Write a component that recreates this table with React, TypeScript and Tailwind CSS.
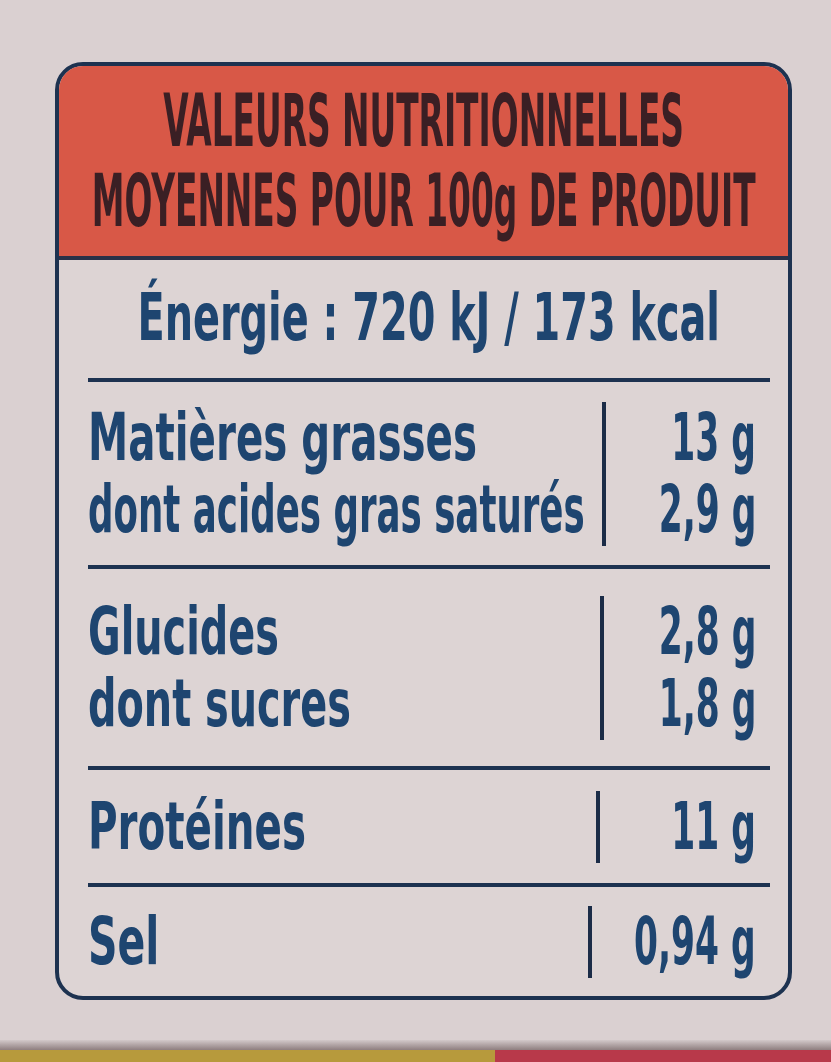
type Row = { label: string; labelScale: string; value: string; valueBox: string };
type Section = { height: string; rows: Row[]; last?: boolean };

const sections: Section[] = [
  {
    height: "h-[187px]",
    rows: [
      { label: "Matières grasses", labelScale: "scale-x-[0.68]", value: "13 g", valueBox: "w-[164px]" },
      { label: "dont acides gras saturés", labelScale: "scale-x-[0.60]", value: "2,9 g", valueBox: "w-[164px]" },
    ],
  },
  {
    height: "h-[201px]",
    rows: [
      { label: "Glucides", labelScale: "scale-x-[0.67]", value: "2,8 g", valueBox: "w-[166px]" },
      { label: "dont sucres", labelScale: "scale-x-[0.67]", value: "1,8 g", valueBox: "w-[166px]" },
    ],
  },
  {
    height: "h-[117px]",
    rows: [{ label: "Protéines", labelScale: "scale-x-[0.68]", value: "11 g", valueBox: "w-[170px]" }],
  },
  {
    height: "h-[109px]",
    last: true,
    rows: [{ label: "Sel", labelScale: "scale-x-[0.69]", value: "0,94 g", valueBox: "w-[178px]" }],
  },
];

export default function App() {
  const font = { fontFamily: '"DejaVu Sans Condensed", "Liberation Sans Narrow", "Liberation Sans", sans-serif' };

  return (
    <div className="w-[831px] h-[1062px] bg-[#dad0d1] flex flex-col overflow-hidden" style={font}>
      <div className="flex-1 pt-[62px] pl-[55px] pr-[39px]">
        <div className="border-4 border-[#1d3250] rounded-[28px] overflow-hidden bg-[#ddd4d4]">
          <div className="h-[194px] bg-[#d85847] border-b-4 border-[#2a3148] flex flex-col items-center justify-center text-[#3a1f24] font-bold text-[73px] leading-[80px] whitespace-nowrap">
            <div className="scale-x-[0.50]">VALEURS NUTRITIONNELLES</div>
            <div className="scale-x-[0.50]">MOYENNES POUR 100g DE PRODUIT</div>
          </div>
          <div className="pl-[29px] pr-[18px] text-[#1e4570] font-bold">
            <div className="h-[122px] flex items-center justify-center border-b-4 border-[#1d3250] text-[66px]">
              <span className="scale-x-[0.67] whitespace-nowrap pb-[4px]">Énergie : 720 kJ / 173 kcal</span>
            </div>
            {sections.map((section, i) => (
              <div
                key={i}
                className={`${section.height} flex flex-col justify-center ${section.last ? "" : "border-b-4 border-[#1d3250]"}`}
              >
                {section.rows.map((row, j) => (
                  <div key={j} className="flex items-center h-[72px] text-[66px] leading-[72px]">
                    <div className="flex-1 min-w-0 whitespace-nowrap">
                      <span className={`inline-block origin-left ${row.labelScale}`}>{row.label}</span>
                    </div>
                    <div className="w-[4px] self-stretch shrink-0 bg-[#1b2c47]" />
                    <div className={`${row.valueBox} shrink-0 pr-[14px] flex justify-end whitespace-nowrap`}>
                      <span className="shrink-0 origin-right scale-x-[0.58]">{row.value}</span>
                    </div>
                  </div>
                ))}
              </div>
            ))}
          </div>
        </div>
      </div>
      <div className="h-[10px] bg-gradient-to-b from-[#d3c9ca] to-[#8f7f80]" />
      <div className="h-[12px] flex">
        <div className="w-[495px] bg-[#b79a3c]" />
        <div className="flex-1 bg-[#b8394a]" />
      </div>
    </div>
  );
}
